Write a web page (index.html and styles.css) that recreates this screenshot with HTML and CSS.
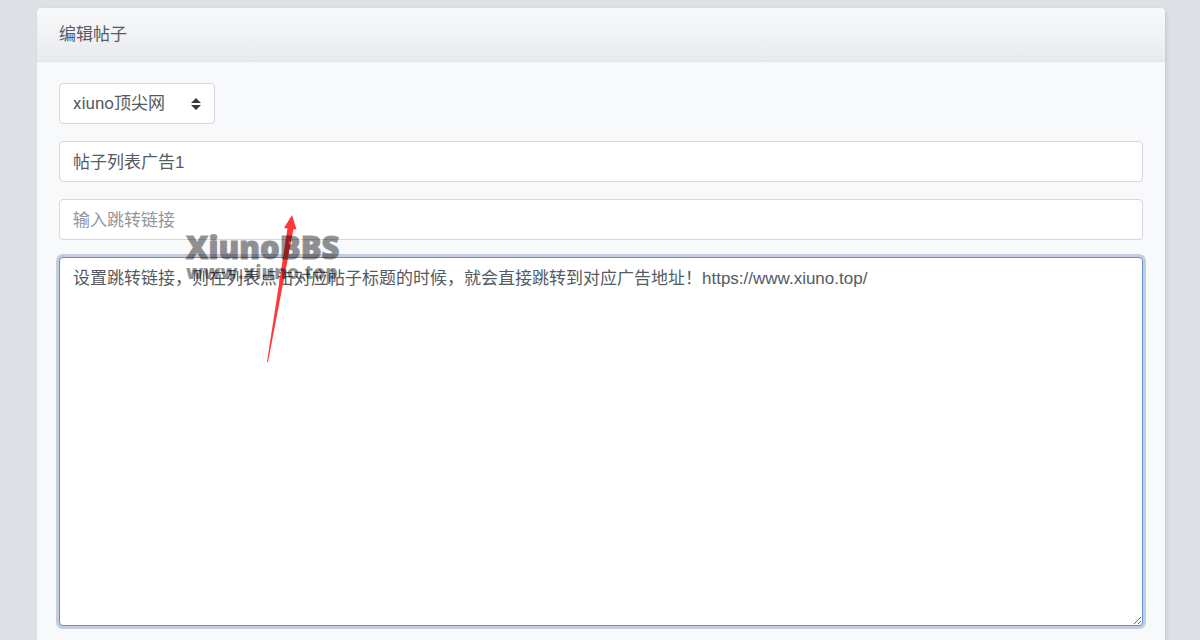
FILE: index.html
```html
<!DOCTYPE html>
<html lang="zh-CN">
<head>
<meta charset="utf-8">
<title>编辑帖子</title>
<link rel="stylesheet" href="styles.css">
</head>
<body>
<main class="page">
  <section class="card">
    <h1 class="card-header">编辑帖子</h1>
    <form class="card-body">
      <div class="select-wrap">
        <select class="field select" aria-label="版块">
          <option>xiuno顶尖网</option>
        </select>
        <svg class="caret" viewBox="0 0 10 12" aria-hidden="true"><path d="M5 0 10 5H0zM0 7h10L5 12z" fill="#343a40"/></svg>
      </div>
      <input class="field" type="text" aria-label="标题" value="帖子列表广告1">
      <input class="field" type="text" aria-label="跳转链接" placeholder="输入跳转链接">
      <textarea class="field message" rows="14" aria-label="内容">设置跳转链接，则在列表点击对应帖子标题的时候，就会直接跳转到对应广告地址！https://www.xiuno.top/</textarea>
    </form>
    <svg class="arrow" viewBox="0 0 30 148" aria-hidden="true"><path d="M25 0 29.500 14.500 26.500 14 1 147 0 147 20.500 13.500 17 13z" fill="#ff3838"/></svg>
    <div class="watermark">
      <span class="watermark-name">XiunoBBS</span>
      <span class="watermark-url">www.xiuno.top</span>
    </div>
  </section>
</main>
</body>
</html>
```
FILE: styles.css
```css
* {
  box-sizing: border-box;
}

html {
  background: #dde0e5;
}

body {
  margin: 0;
  color: #555b61;
  font: 17px/25px "Liberation Sans", "Noto Sans CJK SC", sans-serif;
}

.page {
  padding: 8px 35px 0 37px;
}

.card {
  position: relative;
  background: #f8f9fb;
  border-radius: 4px;
  box-shadow: 0 0 1px rgba(0, 0, 0, 0.2), 3px 3px 3px rgba(0, 20, 50, 0.06);
}

.card-header {
  margin: 0;
  padding: 14px 22px;
  border-bottom: 1px solid #e2e5e8;
  border-radius: 4px 4px 0 0;
  background: linear-gradient(#f8f9fa, #e8ebee);
  font-size: 17px;
  font-weight: 400;
}

.card-body {
  display: flex;
  flex-direction: column;
  gap: 17px;
  padding: 21px 22px;
}

.field {
  display: block;
  width: 100%;
  margin: 0;
  padding: 8px 13px 6px;
  border: 1px solid #d3d8de;
  border-radius: 4px;
  outline: 0;
  background: #fff;
  color: #555b61;
  font: inherit;
}

.field::placeholder {
  color: #8f969d;
  opacity: 1;
}

.select-wrap {
  position: relative;
  align-self: flex-start;
}

.select {
  width: auto;
  height: 41px;
  padding: 7px 48px 7px 13px;
  appearance: none;
  font-family: Roboto, "Noto Sans CJK SC", sans-serif;
}

.caret {
  position: absolute;
  top: 15px;
  right: 14px;
  width: 10px;
  height: 12px;
  pointer-events: none;
}

.message {
  min-height: 369px;
  padding-bottom: 4px;
  border-color: #5b94d3;
  box-shadow: 0 0 0 3px #c3cddd;
  resize: vertical;
}

.arrow {
  position: absolute;
  top: 207px;
  left: 230px;
  width: 30px;
  height: 148px;
  pointer-events: none;
}

.watermark {
  position: absolute;
  top: 224px;
  left: 149px;
  display: flex;
  flex-direction: column;
  color: #000;
  font-family: "Open Sans", "Noto Sans", sans-serif;
  opacity: 0.42;
  pointer-events: none;
}

.watermark-name {
  font-size: 31px;
  font-weight: 800;
  line-height: 30px;
  -webkit-text-stroke: 1px #000;
}

.watermark-url {
  font-size: 19px;
  font-weight: 800;
  line-height: 20px;
}
```
